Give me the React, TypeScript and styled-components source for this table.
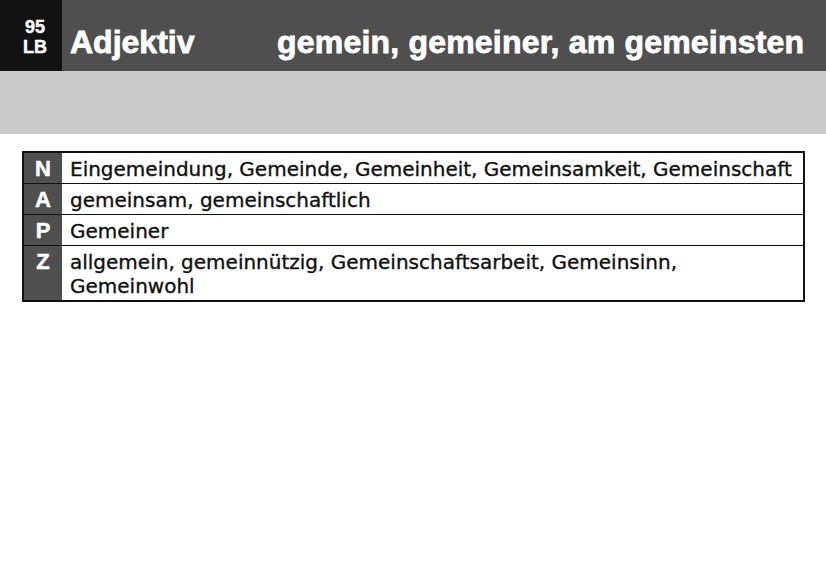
import styled, { createGlobalStyle } from 'styled-components';

const GlobalStyle = createGlobalStyle`
  body {
    margin: 0;
    background: #ffffff;
    font-family: "Liberation Sans", Arial, sans-serif;
  }
`;

const Page = styled.div`
  width: 826px;
  height: 588px;
  background: #ffffff;
`;

const Header = styled.div`
  display: flex;
  height: 71px;
  background: #4f4f4f;
`;

const PageBadge = styled.div`
  width: 62px;
  background: #121212;
  color: #ffffff;
  display: flex;
  flex-direction: column;
  align-items: center;
  justify-content: center;
  padding: 2px 0 0 8px;
  box-sizing: border-box;
  font-weight: bold;
  font-size: 18px;
  line-height: 20px;
  -webkit-text-stroke: 0.4px #ffffff;
`;

const Title = styled.div`
  display: flex;
  align-items: flex-end;
  padding: 0 0 13px 8px;
  color: #ffffff;
  font-weight: bold;
  font-size: 32px;
  line-height: 1;
  -webkit-text-stroke: 0.8px #ffffff;
`;

const WordType = styled.span`
  width: 207px;
`;

const Forms = styled.span`
  letter-spacing: 0.2px;
`;

const Band = styled.div`
  height: 63px;
  background: #cacaca;
`;

const Table = styled.div`
  margin: 17px 21px 0 22px;
  border: 2px solid #111111;
`;

const Row = styled.div`
  display: flex;
  & + & {
    border-top: 1px solid #111111;
  }
`;

const Letter = styled.div`
  width: 38px;
  flex-shrink: 0;
  background: #4f4f4f;
  color: #ffffff;
  font-weight: bold;
  font-size: 22px;
  text-align: center;
  line-height: 24px;
  padding-top: 4px;
  -webkit-text-stroke: 0.5px #ffffff;
`;

const Words = styled.div`
  flex: 1;
  padding: 4px 8px 2px 8px;
  font-family: "DejaVu Sans", sans-serif;
  font-size: 20px;
  line-height: 24px;
  color: #111111;
  -webkit-text-stroke: 0.35px #111111;
`;

const rows = [
  { letter: 'N', words: 'Eingemeindung, Gemeinde, Gemeinheit, Gemeinsamkeit, Gemeinschaft' },
  { letter: 'A', words: 'gemeinsam, gemeinschaftlich' },
  { letter: 'P', words: 'Gemeiner' },
  { letter: 'Z', words: 'allgemein, gemeinnützig, Gemeinschaftsarbeit, Gemeinsinn, Gemeinwohl' },
];

export default function App() {
  return (
    <Page>
      <GlobalStyle />
      <Header>
        <PageBadge>
          <span>95</span>
          <span>LB</span>
        </PageBadge>
        <Title>
          <WordType>Adjektiv</WordType>
          <Forms>gemein, gemeiner, am gemeinsten</Forms>
        </Title>
      </Header>
      <Band />
      <Table>
        {rows.map((r) => (
          <Row key={r.letter}>
            <Letter>{r.letter}</Letter>
            <Words>{r.words}</Words>
          </Row>
        ))}
      </Table>
    </Page>
  );
}
